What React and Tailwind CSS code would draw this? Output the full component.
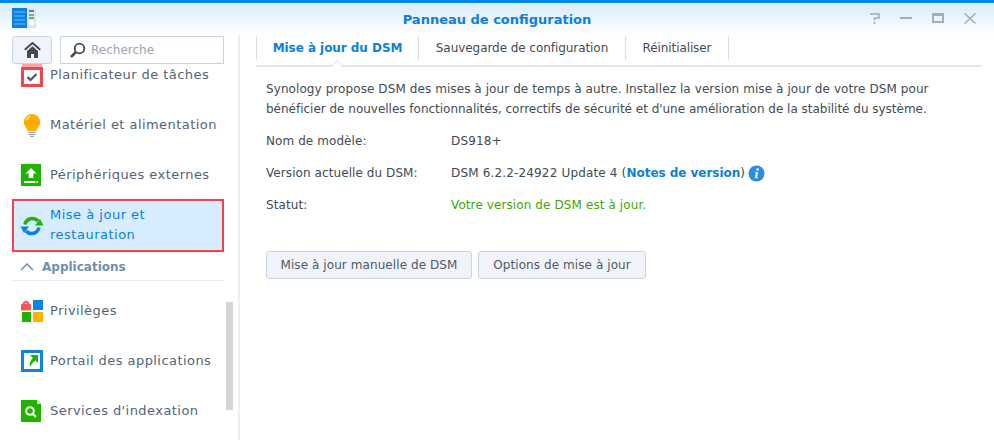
const FONT = "font-['DejaVu_Sans',sans-serif]"

function TaskIcon() {
  return (
    <svg width="22" height="23" viewBox="0 0 22 23">
      <rect x="1" y="0" width="20" height="5" fill="#f9a5a8" />
      <rect x="1.5" y="4.5" width="19" height="17" fill="#fff" stroke="#f5434a" strokeWidth="3" />
      <path d="M6.5 13l3 3 6-6" fill="none" stroke="#4a5560" strokeWidth="2.2" />
    </svg>
  )
}

function BulbIcon() {
  return (
    <svg width="22" height="24" viewBox="0 0 22 24">
      <path d="M11 1a8.200 8.200 0 0 0-8.200 8.200c0 3.300 2.400 5 3.500 7.300.3.700.5 1.200.5 1.500h8.400c0-.3.200-.8.500-1.500 1.100-2.300 3.500-4 3.500-7.300A8.200 8.200 0 0 0 11 1z" fill="#ffab00" />
      <path d="M5.500 7c.5-2 1.800-3 3.500-3.400" fill="none" stroke="#ffe2a0" strokeWidth="1.500" />
      <path d="M7.500 19.500h7M7.500 21.500h7M9 23.300h4" stroke="#9aa3ad" strokeWidth="1.200" />
    </svg>
  )
}

function ExternalIcon() {
  return (
    <svg width="20" height="22" viewBox="0 0 20 22">
      <rect width="20" height="22" fill="#1fb400" />
      <path d="M10 4l5.500 5.500h-3.200V14H7.700V9.500H4.500z" fill="#fff" />
      <rect x="3" y="17" width="14" height="2" fill="#fff" />
      <rect x="14" y="17" width="2" height="2" fill="#ffab00" />
    </svg>
  )
}

function UpdateIcon() {
  return (
    <svg width="24" height="22" viewBox="0 0 24 22">
      <path d="M5 9.500A7.500 7.500 0 0 1 18 6" fill="none" stroke="#1fb400" strokeWidth="3.500" />
      <path d="M15 10.500h8.500L20 4z" fill="#1fb400" />
      <path d="M19 12.500A7.500 7.500 0 0 1 6 16" fill="none" stroke="#0b82e8" strokeWidth="3.500" />
      <path d="M.5 11.500H9L4 18z" fill="#0b82e8" />
    </svg>
  )
}

function PrivilegeIcon() {
  return (
    <svg width="22" height="22" viewBox="0 0 22 22">
      <path d="M2.500 4.500a2.500 2.500 0 0 1 5 0" fill="none" stroke="#f5545a" strokeWidth="1.800" />
      <rect x="0" y="4" width="10" height="6.500" rx="1" fill="#f5545a" />
      <rect x="12" y="0" width="10" height="10" fill="#0b82e8" />
      <rect x="1" y="12" width="9" height="10" fill="#1fb400" />
      <rect x="12" y="12" width="10" height="10" fill="#ffb300" />
    </svg>
  )
}

function PortalIcon() {
  return (
    <svg width="22" height="22" viewBox="0 0 22 22">
      <rect x="1.500" y="1.500" width="19" height="19" fill="#fff" stroke="#0b82e8" strokeWidth="3" />
      <path d="M9 5h8v8l-2.600-2.600c-2 1.600-4 3.500-5.400 6.600-1-3.500.5-6.500 2.800-9z" fill="#1fb400" />
    </svg>
  )
}

function IndexIcon() {
  return (
    <svg width="20" height="22" viewBox="0 0 20 22">
      <path d="M0 0h16l4 4v18H0z" fill="#1fb400" />
      <path d="M16 0l4 4h-4z" fill="#bfe8b4" />
      <circle cx="9" cy="11" r="3.800" fill="none" stroke="#fff" strokeWidth="2" />
      <path d="M12 14l3 3" stroke="#fff" strokeWidth="2.200" />
    </svg>
  )
}

function InfoIcon() {
  return (
    <svg width="17" height="17" viewBox="0 0 17 17">
      <circle cx="8.500" cy="8.500" r="8" fill="#2a8ee6" />
      <circle cx="9.600" cy="4.500" r="1.300" fill="#fff" />
      <path d="M7.200 7.200h3l-1.200 5h1.100l-.2 1H6.800l1.200-5H7z" fill="#fff" />
    </svg>
  )
}

function NavItem({ icon, label }) {
  return (
    <div className="flex items-center h-[50px] text-[#546478] shrink-0">
      <div className="w-[38px] pl-[9px] flex justify-start shrink-0">{icon}</div>
      <span className="tracking-[0.44px]">{label}</span>
    </div>
  )
}

export default function App() {
  return (
    <div className={`${FONT} w-[994px] h-[440px] overflow-hidden bg-white flex flex-col text-[13px] text-[#414b55]`}>
      {/* title bar */}
      <div className="h-[35px] shrink-0 border-t-[3px] border-[#0086e5] bg-gradient-to-b from-[#d9ebfa] to-white flex items-center px-3 relative">
        <svg width="24" height="21" viewBox="0 0 24 21" className="mt-[-2px]">
          <rect width="15" height="20" fill="#0b82e0" />
          <path d="M2 4h11M2 8h11M2 12h11M2 16h11" stroke="#6cbcf5" strokeWidth="1" />
          <rect x="15" y="0" width="9" height="20" fill="#dfe4e8" />
          <path d="M17 3h5" stroke="#3a5870" strokeWidth="1.500" />
          <path d="M17 7h5" stroke="#20a8c0" strokeWidth="1.500" />
          <path d="M17 10h5" stroke="#3fae20" strokeWidth="1.500" />
          <circle cx="19.500" cy="15" r="2.500" fill="#fff" />
        </svg>
        <div className="absolute left-0 right-0 top-[7px] text-center font-bold text-[#0b7fe0] text-[13px]">
          Panneau de configuration
        </div>
        <div className="ml-auto flex items-center pr-[6px] mt-[-2px]">
          <svg width="12" height="11" viewBox="0 0 12 11" className="mr-[19px]">
            <path d="M1 1h9v4H5.500v2.500" fill="none" stroke="#a4acb5" strokeWidth="1.600" />
            <rect x="4.700" y="9" width="1.600" height="2" fill="#a4acb5" />
          </svg>
          <span className="w-[12px] h-[2px] bg-[#a4acb5] mr-[20px]" />
          <span className="w-[12px] h-[10px] border-2 border-t-[3px] border-[#a4acb5] mr-[20px]" />
          <svg width="12" height="11" viewBox="0 0 12 11"><path d="M.5.500l11 10M11.500.500l-11 10" stroke="#a4acb5" strokeWidth="1.500" /></svg>
        </div>
      </div>

      <div className="flex flex-1 min-h-0">
        {/* sidebar */}
        <aside className="w-[240px] shrink-0 border-r-2 border-[#eceef0] relative pl-3 pr-[14px] flex flex-col overflow-hidden">
          <div className="flex gap-2 h-[28px] mt-px shrink-0 relative z-10 bg-white">
            <div className="w-[40px] h-[28px] rounded-[3px] border border-[#c9d4e2] bg-[#f0f4fa] flex items-center justify-center">
              <svg width="17" height="16" viewBox="0 0 17 16">
                <path d="M.8 7.800L8.500 1l7.700 6.800" fill="none" stroke="#3f4a55" strokeWidth="2" />
                <path d="M3 9l5.500-4.800L14 9v7h-4v-4H7v4H3z" fill="#3f4a55" />
              </svg>
            </div>
            <div className="flex-1 border border-[#c9d4e2] flex items-center pl-[8px] gap-[5px] text-[12px] text-[#9aa4b0]">
              <svg width="17" height="17" viewBox="0 0 17 17">
                <circle cx="10.500" cy="6.500" r="4.800" fill="none" stroke="#3f4a55" strokeWidth="1.800" />
                <path d="M7 10l-5 5" stroke="#3f4a55" strokeWidth="2.500" />
              </svg>
              Recherche
            </div>
          </div>
          <div className="flex flex-col -mt-[14px]">
            <NavItem icon={<TaskIcon />} label="Planificateur de tâches" />
            <NavItem icon={<BulbIcon />} label="Matériel et alimentation" />
            <NavItem icon={<ExternalIcon />} label="Périphériques externes" />
            <div className="h-[53px] -mt-px mb-px border-2 border-[#f5434a] bg-[#d7ecff] flex items-center text-[#0b7fe0] shrink-0">
              <div className="w-[36px] pl-[6px] shrink-0"><UpdateIcon /></div>
              <span className="leading-[20px] tracking-[0.5px] -mt-[2px]">Mise à jour et<br />restauration</span>
            </div>
            <div className="h-[28px] mb-[5px] border-b border-[#e6ecf2] flex items-center font-bold text-[12px] text-[#6f90ae] shrink-0">
              <svg width="14" height="8" viewBox="0 0 14 8" className="ml-2 mr-[8px]"><path d="M1 7l6-6 6 6" fill="none" stroke="#6f90ae" strokeWidth="1.500" /></svg>
              Applications
            </div>
            <NavItem icon={<PrivilegeIcon />} label="Privilèges" />
            <NavItem icon={<PortalIcon />} label="Portail des applications" />
            <NavItem icon={<IndexIcon />} label="Services d'indexation" />
          </div>
          {/* overlay scrollbar */}
          <div className="absolute left-[226px] top-[267px] w-[7px] h-[108px] bg-[#d4d6d8]" />
        </aside>

        {/* main */}
        <main className="flex-1 pl-[16px] pr-[12px] min-w-0">
          <div className="flex h-[32px] border-b-2 border-[#e2e4e6] relative items-start">
            <Tab className="w-[163px] border-l font-bold text-[#0b7fe0] tracking-[-0.05px]">Mise à jour du DSM</Tab>
            <Tab className="w-[207px] tracking-[-0.06px]">Sauvegarde de configuration</Tab>
            <Tab className="w-[103px] tracking-[-0.1px]">Réinitialiser</Tab>
            <div className="absolute left-[75px] bottom-[-2px] w-[12px] h-[7px] overflow-hidden">
              <div className="w-[10px] h-[10px] ml-px mt-[2px] rotate-45 bg-white border border-[#e2e4e6]" />
            </div>
          </div>

          <div className="pl-[10px] pt-[12px] text-[12px]">
            <p className="leading-[20px]">
              <span className="tracking-[0.085px]">Synology propose DSM des mises à jour de temps à autre. Installez la version mise à jour de votre DSM pour</span><br />
              <span className="tracking-[-0.01px]">bénéficier de nouvelles fonctionnalités, correctifs de sécurité et d'une amélioration de la stabilité du système.</span>
            </p>
            <div className="mt-[6px] flex flex-col">
              <Row label="Nom de modèle:"><span className="tracking-[0.16px]">DS918+</span></Row>
              <Row label="Version actuelle du DSM:">
                <span className="tracking-[0.16px]">DSM 6.2.2-24922 Update 4 (<b className="text-[#0b7fe0] tracking-[-0.03px]">Notes de version</b>)</span>
                <span className="ml-[3px]"><InfoIcon /></span>
              </Row>
              <Row label="Statut:"><span className="text-[#3fa800] tracking-[0.1px]">Votre version de DSM est à jour.</span></Row>
            </div>
            <div className="flex gap-[6px] mt-[30px] tracking-[0.08px]">
              <Btn className="w-[206px]">Mise à jour manuelle de DSM</Btn>
              <Btn className="w-[168px]">Options de mise à jour</Btn>
            </div>
          </div>
        </main>
      </div>
    </div>
  )
}

function Tab({ className, children }) {
  return (
    <div className={`h-[24px] mt-px flex items-center justify-center border-r border-[#d6dde5] text-[12px] ${className}`}>
      {children}
    </div>
  )
}

function Row({ label, children }) {
  return (
    <div className="flex items-center h-[32px]">
      <div className="w-[185px] shrink-0 tracking-[0.08px]">{label}</div>
      {children}
    </div>
  )
}

function Btn({ className, children }) {
  return (
    <div className={`h-[28px] rounded-[3px] border border-[#c9d4e2] bg-[#f0f4fa] flex items-center justify-center text-[#505a64] ${className}`}>
      {children}
    </div>
  )
}
